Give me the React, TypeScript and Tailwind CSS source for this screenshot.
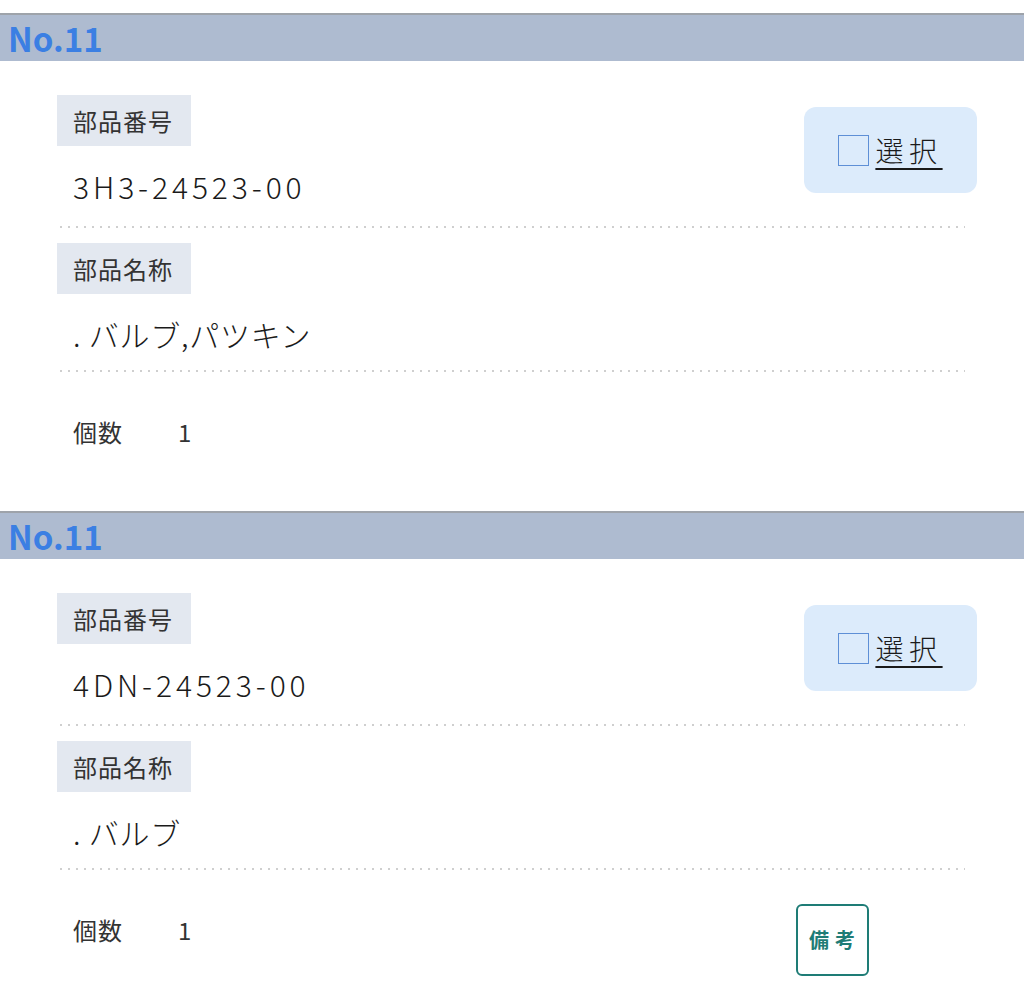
const font = { fontFamily: '"Noto Sans CJK JP", "Noto Sans", sans-serif' };

type Part = { no: string; number: string; name: string; qty: string; note?: boolean };

const parts: Part[] = [
  { no: "No.11", number: "3H3-24523-00", name: ". バルブ,パツキン", qty: "1" },
  { no: "No.11", number: "4DN-24523-00", name: ". バルブ", qty: "1", note: true },
];

function Dots() {
  return (
    <div className="ml-[3px] mr-[12px] h-[2px] bg-[linear-gradient(to_right,#cfcfcf_2px,transparent_2px)] bg-[length:8px_2px]" />
  );
}

function Label({ children }: { children: string }) {
  return (
    <div className="inline-flex h-[51px] w-[134px] items-center bg-[#e3e8f0] pl-4 text-[24px] tracking-[0.04em] text-[#333]">
      {children}
    </div>
  );
}

function PartCard({ part }: { part: Part }) {
  return (
    <section>
      <header className="flex h-[48px] items-center border-t-2 border-[#9ea3aa] bg-[#aebbd0] pl-2">
        <span className="text-[33px] font-bold leading-none text-[#3b7fe3]">{part.no}</span>
      </header>
      <div className="pb-[62px] pl-[57px] pr-[47px] pt-[34px]">
        <div className="flex items-start">
          <div className="flex-1">
            <Label>部品番号</Label>
            <p className="py-5 pl-4 text-[30px] font-light leading-[40px] tracking-[0.13em] text-[#1a1a1a]">{part.number}</p>
          </div>
          <button className="mt-3 flex h-[86px] w-[173px] items-center justify-center rounded-xl bg-[#dcebfb]">
            <span className="mr-[6px] h-[31px] w-[31px] border border-[#5e8fd6] bg-[#dcebfb]" />
            <span className="text-[28px] font-light leading-none tracking-[0.2em] text-[#1a1a1a] underline underline-offset-[6px] decoration-2">
              選択
            </span>
          </button>
        </div>
        <Dots />
        <div className="pt-[15px]">
          <Label>部品名称</Label>
          <p className="pb-4 pl-4 pt-5 text-[30px] font-light leading-[40px] tracking-[0.025em] text-[#1a1a1a]">{part.name}</p>
        </div>
        <Dots />
        <div className="flex items-start pt-[34px]">
          <div className="mt-[9px] flex pl-4 text-[24px] leading-[34px] tracking-[0.04em] text-[#333]">
            <span className="w-[105px]">個数</span>
            <span>{part.qty}</span>
          </div>
          {part.note ? (
            <button className="ml-auto mr-[108px] flex h-[72px] w-[73px] items-center justify-center rounded-md border-2 border-[#1e7c76] pl-[5px] text-[20px] font-bold tracking-[0.3em] text-[#1e7c76]">
              備考
            </button>
          ) : null}
        </div>
      </div>
    </section>
  );
}

export default function App() {
  return (
    <div className="min-h-screen bg-white pt-[13px]" style={font}>
      {parts.map((p, i) => (
        <PartCard key={i} part={p} />
      ))}
    </div>
  );
}
